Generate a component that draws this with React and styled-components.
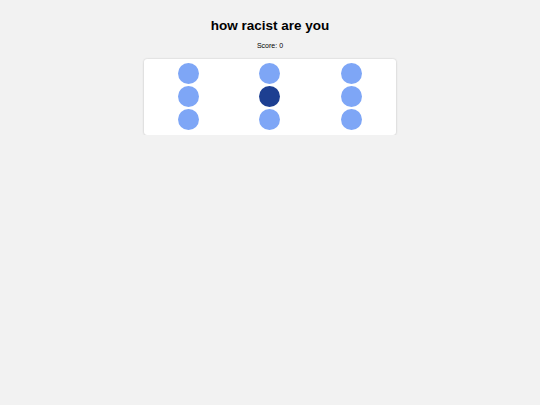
import React, { useState } from "react";
import styled, { createGlobalStyle } from "styled-components";

const GlobalStyle = createGlobalStyle`
  html, body {
    margin: 0;
    padding: 0;
    background: #f2f2f2;
  }
  body {
    font-family: "Liberation Sans", Arial, sans-serif;
    color: #000;
  }
`;

const Page = styled.main`
  display: flex;
  flex-direction: column;
  align-items: center;
  padding-top: 18px;
`;

const Title = styled.h1`
  margin: 0;
  font-size: 13.5px;
  line-height: 16px;
  font-weight: 700;
`;

const Score = styled.p`
  margin: 8px 0 0;
  font-size: 7px;
  line-height: 8px;
`;

const Board = styled.section`
  margin-top: 9px;
  width: 252px;
  box-sizing: border-box;
  padding: 3px 4px 4px;
  background: #fff;
  border-radius: 3px;
  box-shadow: 0 0 2px rgba(0, 0, 0, 0.18), 0 1px 3px rgba(0, 0, 0, 0.06);
  display: grid;
  grid-template-columns: repeat(3, 1fr);
`;

const Column = styled.div`
  display: flex;
  flex-direction: column;
  align-items: center;
`;

const Dot = styled.button`
  width: 21px;
  height: 21px;
  margin: 1px 0;
  padding: 0;
  border: none;
  border-radius: 50%;
  background: ${(p) => (p.$active ? "#1d3f91" : "#7ea6f6")};
  cursor: pointer;
`;

export default function App() {
  const [active] = useState(4);
  const [score] = useState(0);
  const columns = [0, 1, 2];
  const rows = [0, 1, 2];

  return (
    <>
      <GlobalStyle />
      <Page>
        <Title>how racist are you</Title>
        <Score>Score: {score}</Score>
        <Board>
          {columns.map((c) => (
            <Column key={c}>
              {rows.map((r) => (
                <Dot key={r} $active={r * 3 + c === active} aria-label={`dot ${r * 3 + c + 1}`} />
              ))}
            </Column>
          ))}
        </Board>
      </Page>
    </>
  );
}
